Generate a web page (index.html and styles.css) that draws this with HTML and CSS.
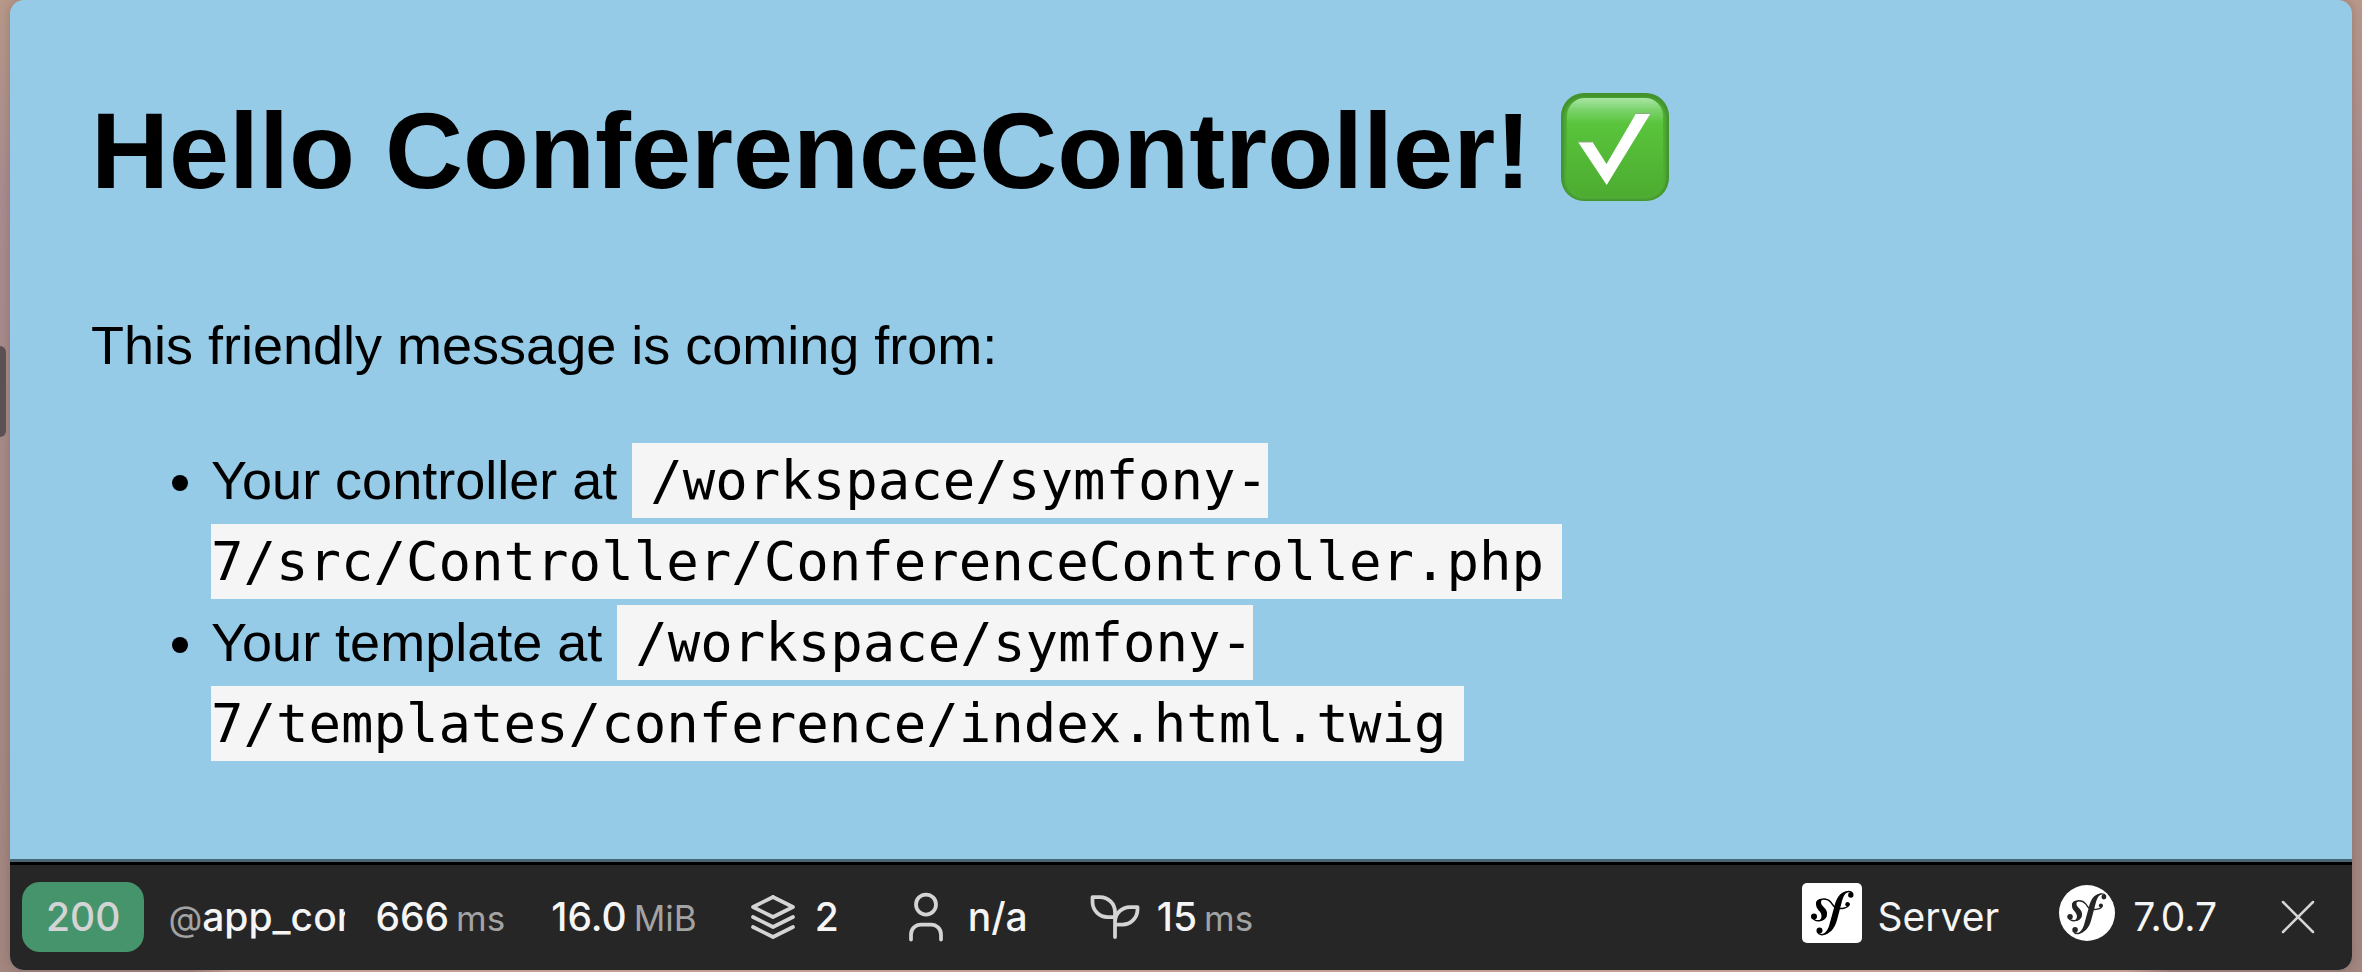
FILE: index.html
```html
<!DOCTYPE html>
<html lang="en">
<head>
<meta charset="utf-8">
<title>Hello ConferenceController!</title>
<link rel="stylesheet" href="styles.css">
</head>
<body>
<span class="edge-handle"></span>
<div class="window">
  <main class="content">
    <h1 class="title">Hello ConferenceController!
      <svg class="check" viewBox="0 0 108 108" role="img" aria-label="Check mark">
        <defs>
          <linearGradient id="face" x1="0" y1="0" x2="0" y2="1">
            <stop offset="0" stop-color="#a9e6a4"/>
            <stop offset="0.12" stop-color="#7bd36c"/>
            <stop offset="0.26" stop-color="#59c43c"/>
            <stop offset="1" stop-color="#4dac30"/>
          </linearGradient>
          <filter id="soft" x="-10%" y="-10%" width="120%" height="120%"><feGaussianBlur stdDeviation="1.6"/></filter>
          <clipPath id="tile"><rect width="108" height="108" rx="23"/></clipPath>
        </defs>
        <g clip-path="url(#tile)">
          <rect width="108" height="108" fill="#42932c"/>
          <rect x="3" y="5" width="102" height="101" rx="20" fill="#50b034" filter="url(#soft)"/>
          <rect x="6" y="5" width="96" height="98" rx="18" fill="url(#face)"/>
        </g>
        <path d="M17 49h14.500l14 22L75 20.500h14.500L45.700 92z" fill="#fff"/>
        <path d="M17 49h14.500M75 20.500h14.500" stroke="#8fa88a" stroke-width="1"/>
      </svg>
    </h1>
    <p class="intro">This friendly message is coming from:</p>
    <ul class="sources">
      <li>Your controller at <code>/workspace/symfony-<wbr>7/src/Controller/ConferenceController.php</code></li>
      <li>Your template at <code>/workspace/symfony-<wbr>7/templates/conference/index.html.twig</code></li>
    </ul>
  </main>
  <footer class="toolbar">
    <a class="status" href="#">200</a>
    <a class="item route" href="#"><span class="unit">@</span>app_con</a>
    <a class="item" href="#">666<span class="unit">ms</span></a>
    <a class="item" href="#">16.0<span class="unit">MiB</span></a>
    <a class="item with-icon" href="#">
      <svg class="icon" viewBox="0 0 24 24"><path d="M12 4L4 8l8 4 8-4-8-4M4 12l8 4 8-4M4 16l8 4 8-4"/></svg>2</a>
    <a class="item with-icon" href="#">
      <svg class="icon" viewBox="0 0 24 24"><circle cx="12" cy="7" r="4"/><path d="M6 21v-2a4 4 0 0 1 4-4h4a4 4 0 0 1 4 4v2"/></svg>n/a</a>
    <a class="item with-icon" href="#">
      <svg class="icon" viewBox="0 0 24 24"><path d="M12 10a6 6 0 0 0-6-6H3v2a6 6 0 0 0 6 6h3M12 14a6 6 0 0 1 6-6h3v1a6 6 0 0 1-6 6h-3M12 20V10"/></svg><span>15<span class="unit">ms</span></span></a>
    <div class="right">
      <a class="item with-logo" href="#">
        <svg class="logo" viewBox="0 0 60 60">
          <defs>
            <g id="mark">
              <path stroke="none" d="M14 21C14 27 19.500 28 19.500 33C19.500 36 18 37.500 15 38C22 38.500 25.500 34 25 29.500C24.500 25 19 23 19 19.500C19 17.500 20 16.800 21.500 16.300C17 15.500 14 17.500 14 21z"/>
              <path stroke="none" d="M46 8.500C38 8 34 16 32.500 23L27 43C25.500 48 22 51 19.500 51.800C28 51.500 32.500 46 35 37L39.500 20C41 14 43 10 46 8.500z"/>
              <path fill="none" stroke-width="1.500" stroke-linecap="round" d="M14.800 21C15 15 25 14.500 29 19.500C31 22 31.500 23.500 33.500 24.500C38 26.500 46.500 25.500 47 21M40 13C42.500 8 48.500 7.500 50.500 10.500M30 42C27 52.500 18 53.500 15.500 49M24 33C22 38.500 13 39.500 10.500 34.500"/>
              <g stroke="none">
                <circle cx="48.800" cy="12" r="2.700"/>
                <circle cx="45.500" cy="21.300" r="2.200"/>
                <circle cx="17.500" cy="47.500" r="3"/>
                <circle cx="12" cy="33.500" r="3"/>
              </g>
            </g>
          </defs>
          <rect width="60" height="60" rx="5" fill="#fff"/>
          <use href="#mark" fill="#000" stroke="#000"/>
        </svg>Server</a>
      <a class="item with-logo version" href="#">
        <svg class="logo" viewBox="0 0 60 60"><circle cx="30" cy="30" r="28" fill="#fff"/><use href="#mark" transform="translate(2 3) scale(.92)" fill="#262626" stroke="#262626"/></svg>7.0.7</a>
      <button class="close" type="button" aria-label="Close toolbar">
        <svg class="icon thin" viewBox="0 0 24 24"><path d="M18 6L6 18M6 6l12 12"/></svg></button>
    </div>
  </footer>
</div>
</body>
</html>
```
FILE: styles.css
```css
* { box-sizing: border-box; }

body {
  margin: 0;
  min-height: 100vh;
  display: flex;
  padding: 0 10px 2px;
  overflow: hidden;
  background:
    linear-gradient(90deg, transparent 8%, #d2b0a3 10%, #d2b0a3 90%, transparent 92%) bottom / 100% 2px no-repeat,
    linear-gradient(#b9998a, #a98d90 20%, #a78b87 60%, #a3877f);
}

.edge-handle {
  position: absolute;
  left: 0;
  top: 346px;
  width: 6px;
  height: 91px;
  border-radius: 0 6px 6px 0;
  background: #5b5152;
}

.window {
  flex: 1;
  display: flex;
  flex-direction: column;
  border-radius: 14px;
  overflow: hidden;
  background: #96cbe8;
  box-shadow: 0 0 12px rgba(60, 30, 30, .25);
}

.content {
  flex: 1;
  padding: 70px 81px 80px;
  font: 54px/81px "Liberation Sans", Arial, sans-serif;
  color: #000;
}

.title {
  margin: 0 0 73px;
  font-size: 108px;
  line-height: 162px;
}

.check {
  width: 108px;
  height: 108px;
  vertical-align: -13px;
}

.intro { margin: 0 0 54px; }

.sources {
  margin: 0;
  padding-left: 120px;
}

code {
  padding: 6px 18px;
  background: #f5f5f5;
  font: 54px/81px "DejaVu Sans Mono", monospace;
}

.toolbar {
  display: flex;
  align-items: center;
  height: 111px;
  padding: 2px 8px 0 12px;
  border-top: 3px solid #4b6674;
  box-shadow: inset 0 3px #000;
  background: #262626;
  font: 500 39px/48px Inter, sans-serif;
  color: #f5f5f5;
}

.toolbar a {
  color: inherit;
  text-decoration: none;
}

.toolbar .status {
  padding: 11px 24px;
  border-radius: 18px;
  background: #45946c;
  color: #d4d4d4;
}

.item {
  display: flex;
  align-items: baseline;
  padding: 0 23px;
  white-space: nowrap;
}

.unit {
  margin-left: 7px;
  font-size: 35px;
  font-weight: 400;
  color: #a3a3a3;
}

.route {
  width: 177px;
  margin: 0 7px 0 24px;
  padding: 0;
  overflow: hidden;
}

.route .unit { margin: 0; }

.with-icon,
.with-logo { align-items: center; }

.with-icon { gap: 12px; }

.with-icon + .with-icon { margin-left: 11px; }

.with-logo {
  gap: 16px;
  font-weight: 400;
}

.version { margin-left: 12px; }

.icon {
  flex: none;
  width: 60px;
  height: 60px;
  fill: none;
  stroke: #d4d4d4;
  stroke-width: 1.5;
  stroke-linecap: round;
  stroke-linejoin: round;
}

.icon.thin { stroke-width: 1; }

.logo {
  flex: none;
  width: 60px;
  height: 60px;
  margin-bottom: 8px;
}

.right {
  display: flex;
  align-items: center;
  margin-left: auto;
}

.close {
  display: flex;
  padding: 0 16px;
  margin-left: 12px;
  border: 0;
  background: none;
}
```
